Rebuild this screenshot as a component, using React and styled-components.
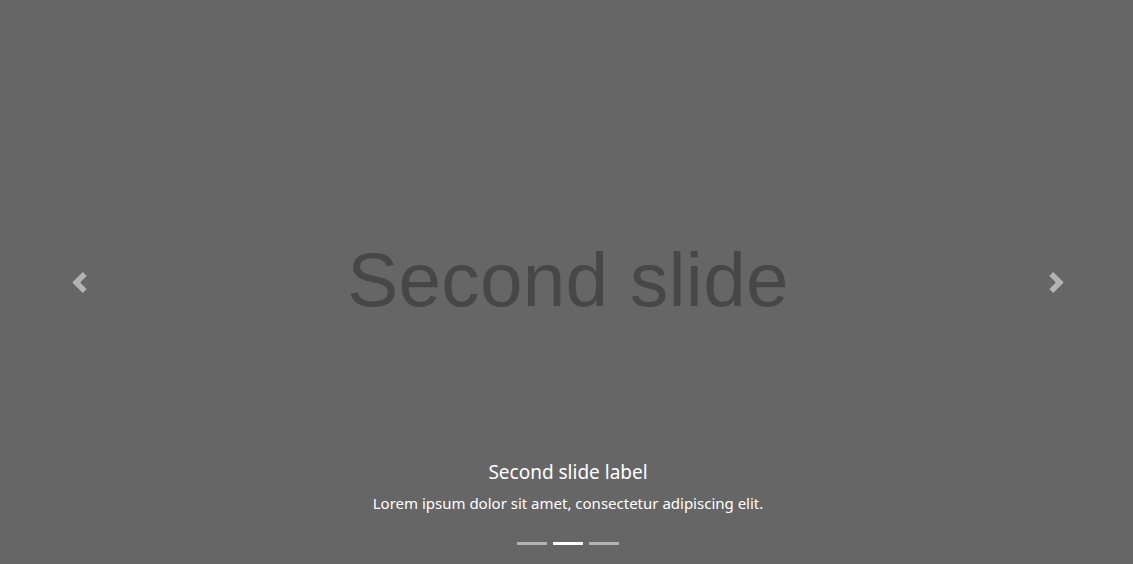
import React, { useState } from "react";
import styled, { createGlobalStyle } from "styled-components";

const GlobalStyle = createGlobalStyle`
  html, body {
    margin: 0;
    padding: 0;
    overflow: hidden;
    background: #666;
  }
`;

const slides = [
  {
    title: "First slide",
    label: "First slide label",
    text: "Nulla vitae elit libero, a pharetra augue mollis interdum.",
  },
  {
    title: "Second slide",
    label: "Second slide label",
    text: "Lorem ipsum dolor sit amet, consectetur adipiscing elit.",
  },
  {
    title: "Third slide",
    label: "Third slide label",
    text: "Praesent commodo cursus magna, vel scelerisque nisl consectetur.",
  },
];

const Carousel = styled.div`
  position: relative;
  width: 1136px;
  height: 564px;
  background-color: #666;
  overflow: hidden;
`;

const Slide = styled.div`
  height: 100%;
  display: flex;
  align-items: center;
  justify-content: center;
`;

const SlideTitle = styled.div`
  font-family: "Liberation Sans", Arial, sans-serif;
  font-size: 76.5px;
  color: #474747;
  line-height: 1;
  margin-bottom: 3px;
  letter-spacing: 0.3px;
`;

const Control = styled.button`
  position: absolute;
  top: 0;
  bottom: 0;
  ${({ side }) => (side === "prev" ? "left: 0;" : "right: 0;")}
  width: 159px;
  display: flex;
  align-items: center;
  justify-content: center;
  background: none;
  border: 0;
  padding: 0;
  opacity: 0.5;
  cursor: pointer;
  svg {
    width: 21px;
    height: 21px;
    display: block;
  }
`;

const Caption = styled.div`
  position: absolute;
  left: 15%;
  right: 15%;
  bottom: 50px;
  text-align: center;
  color: #fff;
  font-family: "Noto Sans", "Open Sans", sans-serif;
`;

const Label = styled.h5`
  margin: 0 0 8px;
  font-size: 19px;
  font-weight: 400;
  line-height: 1.2;
`;

const Text = styled.p`
  margin: 0;
  font-size: 15px;
  line-height: 1.5;
`;

const Indicators = styled.ol`
  position: absolute;
  left: 0;
  right: 0;
  bottom: 19px;
  margin: 0;
  padding: 0;
  list-style: none;
  display: flex;
  justify-content: center;
  gap: 6px;
`;

const Dot = styled.li`
  width: 30px;
  height: 3px;
  background-color: #fff;
  opacity: ${({ active }) => (active ? 1 : 0.5)};
  cursor: pointer;
`;

export default function App() {
  const [index, setIndex] = useState(1);
  const slide = slides[index];
  const go = (d) => setIndex((index + d + slides.length) % slides.length);

  return (
    <>
      <GlobalStyle />
      <Carousel>
        <Slide>
          <SlideTitle>{slide.title}</SlideTitle>
        </Slide>
        <Control side="prev" onClick={() => go(-1)} aria-label="Previous">
          <svg viewBox="0 0 8 8" fill="#fff">
            <path d="M5.25 0l-4 4 4 4 1.5-1.5-2.5-2.5 2.5-2.5-1.5-1.5z" />
          </svg>
        </Control>
        <Control side="next" onClick={() => go(1)} aria-label="Next">
          <svg viewBox="0 0 8 8" fill="#fff">
            <path d="M2.75 0l-1.5 1.5 2.5 2.5-2.5 2.5 1.5 1.5 4-4-4-4z" />
          </svg>
        </Control>
        <Caption>
          <Label>{slide.label}</Label>
          <Text>{slide.text}</Text>
        </Caption>
        <Indicators>
          {slides.map((s, i) => (
            <Dot key={s.title} active={i === index} onClick={() => setIndex(i)} />
          ))}
        </Indicators>
      </Carousel>
    </>
  );
}
